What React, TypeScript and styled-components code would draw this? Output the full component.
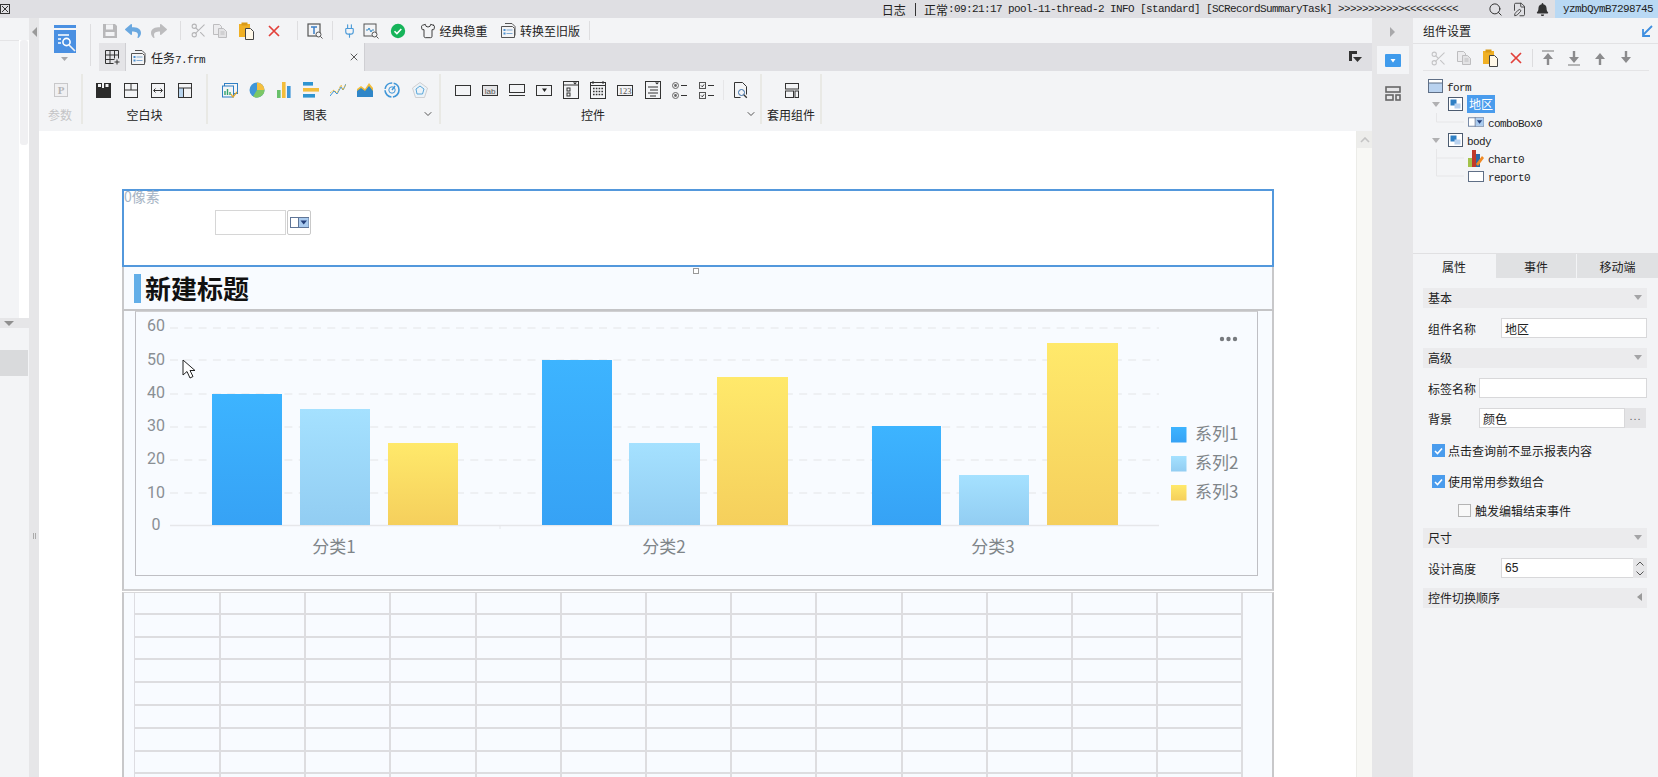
import React from "react";
import styled, { createGlobalStyle } from "styled-components";
import { Scissors, Shirt, Search, FilePen, Plug, X as XIcon, ChevronDown } from "lucide-react";
import { FaReply, FaShare, FaBell } from "react-icons/fa";

const CJK = `"Noto Sans CJK SC", "Liberation Sans", sans-serif`;
const MONO = `"Liberation Mono", "Noto Sans CJK SC", monospace`;

const Global = createGlobalStyle`
  html, body { margin: 0; padding: 0; background: #f3f4f6; }
  * { box-sizing: border-box; }
  body { font-family: ${CJK}; font-size: 12px; color: #222; overflow: hidden; }
`;

const Page = styled.div`
  width: 1658px; height: 777px; display: flex; flex-direction: column; overflow: hidden; background: #f3f4f6; position: relative;
`;
const TopBar = styled.header`
  height: 18px; flex: none; display: flex; align-items: center; background: #dfdfe3;
`;
const WindowMark = styled.svg`width: 10px; height: 10px; flex: none; display: block;`;
const LogArea = styled.div`
  flex: 1; display: flex; justify-content: flex-end; align-items: center; padding-right: 29px; white-space: nowrap; color: #1f1f1f;
`;
const LogCjk = styled.span`font-size: 12px; letter-spacing: 0;`;
const LogDivider = styled.i`width: 1px; height: 13px; background: #333; margin: 0 8px 0 9px;`;
const MonoText = styled.span`font-family: ${MONO}; font-size: 11px; letter-spacing: -0.6px; color: #222;`;
const TopIcons = styled.div`display: flex; align-items: center; gap: 9px; width: 68px; padding-left: 1px; color: #333;`;
const UserBadge = styled.div`
  width: 103px; height: 18px; background: #b9d9f4; display: flex; align-items: center; padding-left: 8px;
`;
const Body = styled.div`flex: 1; display: flex; min-height: 0;`;

const LeftRail = styled.aside`width: 29px; flex: none; display: flex; flex-direction: column; background: #f3f4f6;`;
const RailTop = styled.div`height: 300px; flex: none; display: flex;`;
const RailPane = styled.div`width: 19px; margin-top: 22px; border-top: 1px solid #e4e4e6;`;
const RailStrip = styled.div`width: 10px; background: #fff; margin-top: 22px; padding: 0 1px;`;
const RailThumb = styled.div`height: 105px; width: 8px; background: #f0f0f2; border-radius: 3px;`;
const RailBar = styled.div`height: 10px; flex: none; background: #e6e6e8; display: flex; align-items: center; padding-left: 4px;`;
const RailSelected = styled.div`height: 26px; width: 28px; margin-top: 22px; background: #d9dadc;`;

const Gutter = styled.div<{ $w: number }>`
  width: ${p => p.$w}px; flex: none; background: #e6e6e8; display: flex; flex-direction: column; align-items: center;
`;
const LeftGutterGrip = styled.div`margin-top: auto; margin-bottom: 238px; width: 3px; height: 6px; border-left: 1px solid #aaa; border-right: 1px solid #aaa;`;
const GutterArrow = styled.div`margin-top: 7px; height: 14px; display: flex; align-items: center; justify-content: center;`;
const GutterTab = styled.div<{ $on?: boolean }>`
  width: 32px; height: 28px; display: flex; align-items: center; justify-content: center; margin-top: ${p => (p.$on ? 7 : 5)}px;
  background: ${p => (p.$on ? "#f3f4f6" : "transparent")};
`;

const Center = styled.main`width: 1333px; flex: none; display: flex; flex-direction: column;`;
const Head = styled.div`display: flex; height: 53px; flex: none;`;
const LogoCell = styled.div`
  width: 60px; flex: none; display: flex; flex-direction: column; align-items: center; padding: 7px 9px 0 0; position: relative;
  border-right: 0; gap: 4px;
`;
const LogoRule = styled.i`position: absolute; right: 8px; top: 6px; bottom: 5px; width: 1px; background: #dedee0;`;
const HeadMain = styled.div`flex: 1; display: flex; flex-direction: column; min-width: 0;`;
const QuickBar = styled.div`height: 25px; flex: none; display: flex; align-items: center; padding-left: 1px;`;
const QuickSlot = styled.div<{ $w: number }>`
  width: ${p => p.$w}px; flex: none; height: 25px; display: flex; align-items: center; justify-content: center; gap: 3px; white-space: nowrap;
`;
const QuickRule = styled.i<{ $left?: number }>`width: 1px; height: 19px; background: #dedee0; flex: none; margin-left: ${p => p.$left ?? 0}px;`;
const TabRow = styled.div`height: 28px; flex: none; background: #dfdfe3; display: flex; align-items: stretch; padding-right: 10px;`;
const GridTab = styled.div`width: 27px; background: #e4e4e7; display: flex; align-items: center; justify-content: center; border-right: 1px solid #cfcfd3;`;
const DocTab = styled.div`
  width: 239px; background: #f3f4f6; border-right: 1px solid #cfcfd3; display: flex; align-items: center; padding: 0 4px 0 4px; gap: 4px;
`;
const DocTabClose = styled.span`margin-left: auto; display: flex; color: #333;`;
const TabMenu = styled.div`margin-left: auto; display: flex; align-items: center;`;

const Ribbon = styled.div`height: 60px; flex: none; display: flex; padding-top: 3px;`;
const Section = styled.section<{ $w: number; $pad: number }>`
  width: ${p => p.$w}px; flex: none; height: 50px; border-right: 2px solid #e9e9e5; display: flex; flex-direction: column;
  padding-left: ${p => p.$pad}px;
`;
const RibbonIcons = styled.div`height: 30px; flex: none; display: flex; align-items: center; padding-top: 2px;`;
const RibbonSlot = styled.div`width: 27.15px; flex: none; display: flex; align-items: center; justify-content: center; height: 22px;`;
const RibbonDivider = styled.i`width: 1px; height: 20px; background: #e6e6e8; margin: 0 3px 0 3px; flex: none;`;
const LabelRow = styled.div<{ $pad: number }>`
  height: 20px; flex: none; display: flex; align-items: center; margin-left: -${p => p.$pad}px; color: #222;
`;
const LabelText = styled.span<{ $muted?: boolean }>`flex: 1; text-align: center; font-size: 12px; color: ${p => (p.$muted ? "#c4c4c6" : "#222")}; white-space: nowrap;`;
const LabelChevron = styled.span<{ $w: number }>`width: ${p => p.$w}px; flex: none; display: flex; color: #555;`;

const CanvasRow = styled.div`flex: 1; display: flex; min-height: 0;`;
const Canvas = styled.div`flex: 1; background: #fff; padding: 58px 0 0 83px; overflow: hidden;`;
const VScroll = styled.div`width: 16px; flex: none; background: #f8f8f5; border-left: 1px solid #ecece8;`;
const VScrollUp = styled.div`height: 17px; background: #ededeb; display: flex; align-items: center; justify-content: center;`;

const Form = styled.div`width: 1152px; display: flex; flex-direction: column;`;
const ParamBlock = styled.div`
  height: 78px; flex: none; border: 2px solid #5398dc; background: #fff; display: flex; flex-direction: column;
`;
const PxLabel = styled.div`height: 14px; line-height: 10px; font-size: 14px; color: #a6b4c4;`;
const ParamRow = styled.div`display: flex; margin-top: 5px; padding-left: 91px; gap: 1px;`;
const ParamInput = styled.div`width: 71px; height: 25px; border: 1px solid #d6d6d6; background: #fff;`;
const ParamButton = styled.div`width: 24px; height: 25px; border: 1px solid #c9c9c9; border-radius: 2px; display: flex; align-items: center; justify-content: center;`;
const TitleBlock = styled.div`
  height: 44px; flex: none; position: relative; background: #f8fbff; border-left: 2px solid #c8c8ca; border-right: 2px solid #c8c8ca;
  border-bottom: 2px solid #c4c4c6; display: flex; align-items: center; padding-left: 10px; gap: 4px;
`;
const Handle = styled.i`position: absolute; left: 569px; top: 1px; width: 6px; height: 6px; background: #fff; border: 1px solid #999;`;
const TitleBar = styled.i`width: 7px; height: 29px; background: #62aee8; flex: none;`;
const TitleText = styled.h1`margin: 0; font-size: 26px; line-height: 30px; font-weight: 700; color: #111;`;
const ChartBlock = styled.div`
  height: 280px; flex: none; background: #f8fbff; border-left: 2px solid #c8c8ca; border-right: 2px solid #c8c8ca; border-bottom: 2px solid #d0d0d2;
  padding-left: 11px; position: relative;
`;
const ChartFrame = styled.div`width: 1123px; height: 265px; border: 1px solid #bfbfc4; border-top-color: #d0d0d2;`;
const ChartSvg = styled.svg`display: block; width: 1121px; height: 263px;`;
const Cursor = styled.svg`position: absolute; left: 58px; top: 48px; width: 14px; height: 21px;`;
const TableBlock = styled.div`
  flex: none; height: 190px; margin-top: 1px; background: #f8fbff; border-top: 1px solid #d8d8da; border-left: 2px solid #c8c8ca; border-right: 2px solid #c8c8ca; padding-left: 10px;
`;
const ReportGrid = styled.div`
  display: grid; grid-template-columns: 86px repeat(12, 85.2px); grid-template-rows: 21.8px; grid-auto-rows: 22.8px; border-left: 1px solid #dddde2; width: fit-content;
`;
const ReportCell = styled.div`border-right: 2px solid #dddde0; border-bottom: 2px solid #dddde0;`;

const RightPanel = styled.aside`width: 245px; flex: none; display: flex; flex-direction: column; background: #f3f4f6;`;
const PanelHead = styled.div`height: 26px; flex: none; display: flex; align-items: center; justify-content: space-between; padding: 0 5px 0 10px; border-bottom: 1px solid #e2e2e4; font-size: 12px;`;
const PanelTools = styled.div`height: 27px; flex: none; margin: 0 9px 0 10px; border-bottom: 1px solid #e4e4e6; display: flex; align-items: center; padding: 2px 0 0 2px;`;
const ToolSlot = styled.div`width: 26px; flex: none; display: flex; align-items: center; justify-content: center;`;
const ToolRule = styled.i`width: 1px; height: 18px; background: #dcdcde; margin: 0 2px 0 3px;`;
const Tree = styled.div`height: 182px; flex: none; padding-top: 6px;`;
const TreeRow = styled.div<{ $indent: number }>`height: 18px; display: flex; align-items: center; padding-left: ${p => p.$indent}px; position: relative;`;
const TreeCaret = styled.span`width: 16px; flex: none; display: flex; align-items: center;`;
const TreeElbow = styled.svg`width: 32px; height: 18px; flex: none; display: block;`;
const TreeLabel = styled.span<{ $on?: boolean }>`
  margin-left: 4px; height: 18px; line-height: 18px; display: inline-block; padding: 0 ${p => (p.$on ? 2 : 0)}px;
  color: ${p => (p.$on ? "#fff" : "#222")}; background: ${p => (p.$on ? "#4a9ced" : "transparent")}; font-size: 12px;
`;
const PropTabs = styled.div`height: 25px; flex: none; display: grid; grid-template-columns: 82px 81px 82px; gap: 0; border-top: 1px solid #e0e0e2;`;
const PropTab = styled.div<{ $on?: boolean }>`
  display: flex; align-items: center; justify-content: center; font-size: 12px; background: ${p => (p.$on ? "#f3f4f6" : "#e0e1e3")};
  border-left: ${p => (p.$on ? "0" : "1px solid #f3f4f6")};
`;
const PropList = styled.div`padding: 0 11px 0 10px; display: flex; flex-direction: column;`;
const PropSection = styled.div<{ $top?: number }>`
  height: 20px; flex: none; margin-top: ${p => p.$top ?? 10}px; background: #ebebed; padding: 0 5px 2px; display: flex; align-items: center; justify-content: space-between; font-size: 12px;
`;
const FieldRow = styled.div`height: 20px; flex: none; margin-top: 10px; display: flex; align-items: center; padding-left: 5px;`;
const FieldLabel = styled.span<{ $w: number }>`width: ${p => p.$w}px; flex: none; font-size: 12px; white-space: nowrap;`;
const FieldBox = styled.div`flex: 1; height: 20px; border: 1px solid #d8d8da; background: #fff; display: flex; align-items: center; padding-left: 3px; font-size: 12px;`;
const Number65 = styled.span`font-family: "Liberation Sans", sans-serif; font-size: 12px;`;
const FieldButton = styled.div`width: 21px; height: 20px; flex: none; background: #e4e4e6; margin-right: 1px; display: flex; align-items: center; justify-content: center; color: #666; font-family: "Liberation Sans", sans-serif; font-size: 11px; letter-spacing: 1px; padding-bottom: 4px;`;
const Spinner = styled.div`width: 14px; height: 20px; flex: none; background: #e6e6e8; margin-left: -14px; position: relative; display: flex; flex-direction: column; align-items: center; justify-content: space-around;`;
const CheckRow = styled.label<{ $top: number; $indent: number; $gap?: number }>`
  height: 15px; flex: none; margin-top: ${p => p.$top}px; padding-left: ${p => p.$indent}px; display: flex; align-items: center; gap: ${p => p.$gap ?? 3}px; font-size: 12px; white-space: nowrap;
`;
const CheckBox = styled.span<{ $on?: boolean }>`
  width: 13px; height: 13px; flex: none; background: ${p => (p.$on ? "#4a9ced" : "#f8f8f8")}; border: 1px solid ${p => (p.$on ? "#4a9ced" : "#b4b4b4")}; display: flex; align-items: center; justify-content: center;
`;

type SP = { w?: number; h?: number; vb?: string; children: React.ReactNode };
const Ico = ({ w = 16, h = 16, vb, children }: SP) => (
  <svg width={w} height={h} viewBox={vb ?? `0 0 ${w} ${h}`} fill="none" style={{ display: "block", flex: "none" }}>{children}</svg>
);

const Caret = ({ c = "#9a9a9a", w = 10, h = 5 }: { c?: string; w?: number; h?: number }) => (
  <Ico w={w} h={h}><polygon points={`0,0 ${w},0 ${w / 2},${h}`} fill={c} /></Ico>
);
const CaretSide = () => <Ico w={5} h={8}><polygon points="5,0 5,8 0,4" fill="#9a9a9a" /></Ico>;

const Logo = () => (
  <Ico w={22} h={28}>
    <rect x="0" y="0" width="22" height="3" fill="#4a90e2" />
    <path d="M0 5h22v23H0z" fill="#4a90e2" />
    <path d="M4 10h11M4 14h3M4 18h3" stroke="#fff" strokeWidth="1.4" />
    <circle cx="12.5" cy="17" r="3.6" fill="#4a90e2" stroke="#fff" strokeWidth="1.6" />
    <path d="M15 20l6 6" stroke="#f3f4f6" strokeWidth="1.6" />
  </Ico>
);
const SaveIco = () => (
  <Ico><path d="M1 1h12l2 2v12H1z" fill="#b8b8ba" /><rect x="4" y="1.5" width="7" height="5" fill="#f3f4f6" /><rect x="3.5" y="9" width="9" height="4" fill="#f3f4f6" /></Ico>
);
const CopyIco = ({ c = "#bdbdbf" }: { c?: string }) => (
  <Ico><path d="M1.5 1.5h6l2 2v8h-8z" stroke={c} fill="#ececee" /><path d="M6.5 5.5h5l3 3v6h-8z" stroke={c} fill="#e3e3e5" /><path d="M8.5 9h4M8.5 11h4" stroke={c} /></Ico>
);
const PasteIco = () => (
  <Ico w={17} h={18}><rect x="1" y="2" width="11" height="13" fill="#f0b024" /><rect x="3.5" y="0.5" width="6" height="3" fill="#d99a17" /><path d="M7.5 6.5h5l3 3v8h-8z" fill="#fff8e8" stroke="#444" /></Ico>
);
const RedX = () => <Ico w={14} h={14}><path d="M2 2l10 10M12 2L2 12" stroke="#e2403a" strokeWidth="1.7" /></Ico>;
const TSearch = () => (
  <Ico><rect x="1" y="1" width="12" height="12" stroke="#555" strokeWidth="1.2" /><path d="M4 4h6M7 4v7" stroke="#3a7ec6" strokeWidth="1.5" /><circle cx="11.5" cy="11.5" r="2.5" fill="#f3f4f6" stroke="#555" /><path d="M13.5 13.5l2 2" stroke="#555" /></Ico>
);
const MonitorSearch = () => (
  <Ico><rect x="1" y="1" width="12" height="12" stroke="#555" /><path d="M3 7h2l1-2 2 4 1-2h2" stroke="#3a8cc6" /><circle cx="11.5" cy="11.5" r="2.5" fill="#f3f4f6" stroke="#555" /><path d="M13.5 13.5l2 2" stroke="#555" /></Ico>
);
const GreenCheck = () => <Ico><circle cx="8" cy="8" r="7.2" fill="#16b45a" /><path d="M4.5 8.2l2.4 2.4 4.4-4.6" stroke="#fff" strokeWidth="1.6" /></Ico>;
const DocList = () => (
  <Ico w={17} h={17}><path d="M5 1.5h7l3 3v9" stroke="#555" /><path d="M1.5 4.5h11l2 2v9h-13z" fill="#f3f4f6" stroke="#555" /><rect x="3.5" y="7" width="2" height="2" fill="#4a90d0" /><rect x="3.5" y="10.5" width="2" height="2" fill="#4a90d0" /><path d="M6.5 8h6M6.5 11.5h6" stroke="#7fa9d0" /></Ico>
);
const GridPlus = () => (
  <Ico w={15} h={15}><path d="M.5.5h13M.5.5v13h8M5 .5v13M9.5.5v8M13.5.5v8M.5 5h13M.5 9.5h9" stroke="#333" /><path d="M12 9.5v5M9.5 12h5" stroke="#333" /></Ico>
);
const TabMenuIco = () => <Ico w={13} h={13}><path d="M0 0h8v3H3v7H0z" fill="#333" /><polygon points="4,6 13,6 8.5,11" fill="#333" /></Ico>;

const Rect = ({ w = 16, h = 11, children }: { w?: number; h?: number; children?: React.ReactNode }) => (
  <Ico w={w} h={h}><rect x=".5" y=".5" width={w - 1} height={h - 1} stroke="#333" />{children}</Ico>
);
const R = {
  P: () => <Ico w={14} h={14}><rect x=".5" y=".5" width="13" height="13" stroke="#c8c8ca" fill="#f0f0f2" /><text x="7" y="11" textAnchor="middle" fontFamily="Liberation Serif" fontWeight="700" fontSize="11" fill="#b4b4b6">P</text></Ico>,
  A: () => <Ico w={15} h={15}><path d="M0 0h6v5h1V0h1v0h7v15H0z" fill="#2b2b2b" /><rect x="7" y="0" width="1" height="5" fill="#f3f4f6" /><rect x="9.5" y="1" width="3" height="3" fill="#f3f4f6" /><rect x="2" y="1" width="3" height="3" fill="#f3f4f6" /></Ico>,
  Cross: () => <Ico w={14} h={15}><rect x=".5" y=".5" width="13" height="14" stroke="#333" /><path d="M.5 7h13M7 .5V7" stroke="#333" /></Ico>,
  Fit: () => <Ico w={14} h={15}><rect x=".5" y=".5" width="13" height="14" stroke="#333" /><path d="M3 7.5h8M4.5 5.5l-2 2 2 2M9.5 5.5l2 2-2 2" stroke="#333" /></Ico>,
  Tab: () => <Ico w={14} h={15}><rect x=".5" y=".5" width="13" height="14" stroke="#333" /><rect x="1" y="5" width="4.5" height="9" fill="#b8d4ee" /><path d="M.5 5h13M5.5 5v9.5" stroke="#333" /></Ico>,
  C1: () => <Ico w={16} h={15}><rect x="2.5" y=".5" width="13" height="10" stroke="#2f7fc4" /><rect x=".5" y="3" width="11" height="11" fill="#f3f4f6" stroke="#2f7fc4" /><path d="M3 12V8M5.5 12V6M8 12V9" stroke="#2fa36b" strokeWidth="1.4" /><path d="M9 11l2 3 4-5" stroke="#e0a82e" strokeWidth="1.3" /></Ico>,
  Pie: () => <Ico><circle cx="8" cy="8" r="7.5" fill="#3f96d8" /><path d="M8 8V.5A7.5 7.5 0 0 1 15.5 8z" fill="#f5bf3f" /><path d="M8 8h7.5A7.5 7.5 0 0 1 4 14.4z" fill="#7cc765" /></Ico>,
  Bars: () => <Ico><rect x="1" y="8" width="3.6" height="8" fill="#68c06a" /><rect x="6" y="0" width="3.6" height="16" fill="#f3bd3c" /><rect x="11" y="4" width="3.6" height="12" fill="#3f96d8" /></Ico>,
  HBars: () => <Ico><rect x="0" y="0" width="10" height="3.6" fill="#2f94d0" /><rect x="0" y="6" width="16" height="3.6" fill="#f3bd3c" /><rect x="0" y="12" width="12" height="3.6" fill="#2f94d0" /></Ico>,
  Line: () => <Ico><path d="M0 14l4-5 3 3 4-7 2 3 3-6" stroke="#3f96d8" /><path d="M0 11l4-3 3 3 4-8 2 5 3-6" stroke="#e8b83c" strokeDasharray="2 1" /></Ico>,
  Area: () => <Ico><path d="M0 7l4-3 4 3 4-6 4 5v9H0z" fill="#f2bd3a" /><path d="M0 9l4-3 4 3 4-5 4 5v6H0z" fill="#2f86c8" /></Ico>,
  Gauge: () => <Ico><circle cx="8" cy="8" r="7" stroke="#3f96d8" strokeWidth="1.6" strokeDasharray="10 1.5" /><circle cx="8" cy="8" r="3.2" stroke="#3f96d8" /><path d="M8 8l3-4" stroke="#3f96d8" strokeWidth="1.4" /></Ico>,
  Radar: () => <Ico><polygon points="8,.5 15.5,6 12.5,15.5 3.5,15.5 .5,6" stroke="#cfcfd1" fill="#ecf3f8" /><polygon points="8,4 12,7 10.5,12 5,12 4,7" stroke="#5ba7da" /></Ico>,
  Text: () => <Rect />,
  Lab: () => <Rect><rect x="1" y="1" width="14" height="9" fill="#e4e4e6" /><text x="8" y="8.5" textAnchor="middle" fontFamily="Liberation Sans" fontSize="8" fill="#555">lab</text></Rect>,
  Under: () => <Ico w={16} h={12}><rect x=".5" y=".5" width="15" height="8" stroke="#333" /><path d="M0 11.5h16" stroke="#333" /></Ico>,
  Combo: () => <Rect><polygon points="6,3.5 11,3.5 8.5,7" fill="#222" /></Rect>,
  TreeCb: () => <Ico w={16} h={18}><rect x=".5" y=".5" width="15" height="17" stroke="#333" /><path d="M.5 4h15" stroke="#333" /><polygon points="10,1.5 14,1.5 12,3.5" fill="#222" /><rect x="4" y="7" width="3" height="3" stroke="#333" /><rect x="4" y="12" width="3" height="3" stroke="#333" /></Ico>,
  Cal: () => <Ico w={16} h={18}><rect x=".5" y="1.5" width="15" height="16" stroke="#333" /><path d="M.5 4.5h15M3 0v3M13 0v3" stroke="#333" /><path d="M3 7.5h10M3 10.5h10M3 13.5h10" stroke="#333" strokeWidth="1.6" strokeDasharray="1.6 1.2" /></Ico>,
  N123: () => <Rect><text x="8" y="8.6" textAnchor="middle" fontFamily="Liberation Serif" fontSize="8.5" fill="#555">123</text></Rect>,
  List: () => <Ico w={16} h={18}><rect x=".5" y=".5" width="15" height="17" stroke="#333" /><polygon points="10,1.5 14,1.5 12,3.5" fill="#222" /><path d="M3 6h10M5 9h8M3 12h10M5 15h6" stroke="#333" /></Ico>,
  Radio: () => <Ico w={15} h={17}><circle cx="3.5" cy="3.5" r="3" stroke="#666" /><circle cx="3.5" cy="3.5" r="1.4" fill="#666" /><path d="M9 3.5h6M9 13.5h6" stroke="#333" /><circle cx="3.5" cy="13.5" r="3" stroke="#666" /><circle cx="3.5" cy="13.5" r="1.4" fill="#666" /></Ico>,
  Check: () => <Ico w={15} h={17}><rect x=".5" y=".5" width="6" height="6" stroke="#555" /><path d="M2 3.5l1.3 1.3L5 2.5" stroke="#333" /><path d="M9 3.5h6M9 13.5h6" stroke="#333" /><rect x=".5" y="10.5" width="6" height="6" stroke="#555" /><path d="M2 13.5l1.3 1.3L5 12.5" stroke="#333" /></Ico>,
  Find: () => <Ico w={14} h={17}><path d="M.5.5h8l4 4v8M.5.5v15h6" stroke="#333" /><circle cx="7.5" cy="10.5" r="3" stroke="#3a6ea8" /><path d="M9.8 12.8l3 3" stroke="#333" strokeWidth="1.3" /></Ico>,
  Apply: () => <Ico w={14} h={15}><rect x=".5" y=".5" width="13" height="5.5" stroke="#333" /><rect x=".5" y="8" width="8" height="6.5" stroke="#333" /><rect x="10" y="8" width="3.5" height="6.5" stroke="#333" /></Ico>,
};

const ComboGlyph = ({ w = 19, h = 11 }: { w?: number; h?: number }) => (
  <Ico w={w} h={h} vb="0 0 19 11"><rect x=".5" y=".5" width="18" height="10" fill="#fff" stroke="#5f7597" /><rect x="9" y="1" width="9.5" height="9" fill="#aacbef" /><path d="M8.5 0v11" stroke="#5f7597" /><polygon points="10.5,3.5 17,3.5 13.7,7.5" fill="#243f7a" /></Ico>
);
const FormIco = () => <Ico w={15} h={14}><rect x=".5" y=".5" width="14" height="13" fill="#b9d2ef" stroke="#5f6f86" /><rect x="1" y="1" width="13" height="3" fill="#fff" /><path d="M.5 4h14" stroke="#5f6f86" /></Ico>;
const PanelIco = () => <Ico w={15} h={14}><rect x=".5" y=".5" width="14" height="13" fill="#fff" stroke="#4c5b70" /><rect x="2.5" y="2.5" width="6" height="6" fill="#2f7fc4" /><rect x="6.5" y="6.5" width="6" height="5" fill="#b9d2ef" /></Ico>;
const ChartIco = () => <Ico w={16} h={17}><rect x="0" y="8" width="4" height="9" fill="#a3c24a" /><rect x="4" y="0" width="4" height="17" fill="#c0392b" /><rect x="8" y="4" width="4" height="13" fill="#2c6aa8" /><path d="M8 14l6-8 2 2-6 8z" fill="#f08a24" /></Ico>;
const ReportIco = () => <Ico w={16} h={11}><rect x=".5" y=".5" width="15" height="10" fill="#fff" stroke="#5f6f86" /></Ico>;

const Elbow = ({ full }: { full?: boolean }) => (
  <TreeElbow viewBox="0 0 32 18"><path d={`M.5 0V${full ? 18 : 9}M.5 9H28`} stroke="#e6e6e8" /></TreeElbow>
);
const UpArrow = ({ flip, bar }: { flip?: boolean; bar?: boolean }) => (
  <Ico w={14} h={16}>
    <g transform={flip ? "rotate(180 7 8)" : undefined}>
      {bar && <path d="M1 1h12" stroke="#8b8b8d" strokeWidth="1.2" />}
      <polygon points="7,3 12,9 8.2,9 8.2,15 5.8,15 5.8,9 2,9" fill="#8b8b8d" />
    </g>
  </Ico>
);

const Bar = ({ x, w, top, g }: { x: number; w: number; top: number; g: string }) => (
  <rect x={x} y={top} width={w} height={525 - top} fill={`url(#${g})`} />
);

const Chart = () => (
  <ChartSvg viewBox="136 312 1121 263">
    <defs>
      <linearGradient id="g1" x1="0" y1="0" x2="0" y2="1"><stop offset="0" stopColor="#3db4ff" /><stop offset="1" stopColor="#36a2f5" /></linearGradient>
      <linearGradient id="g2" x1="0" y1="0" x2="0" y2="1"><stop offset="0" stopColor="#a5e1ff" /><stop offset="1" stopColor="#92cdf2" /></linearGradient>
      <linearGradient id="g3" x1="0" y1="0" x2="0" y2="1"><stop offset="0" stopColor="#ffe96b" /><stop offset="1" stopColor="#f5cf5c" /></linearGradient>
    </defs>
    {[328, 360, 394, 427, 460, 493].map(y => (
      <path key={y} d={`M170 ${y}H1159`} stroke="#eaedf0" strokeWidth="1.5" strokeDasharray="8 6.3" />
    ))}
    <path d="M170 525.5H1159" stroke="#e6e7ea" strokeWidth="1.5" />
    <path d="M500 525v4" stroke="#e6e7ea" />
    {[60, 50, 40, 30, 20, 10, 0].map((v, i) => (
      <text key={v} x="156" y={[331, 365, 398, 431, 464, 498, 530][i]} textAnchor="middle" fontFamily="Roboto" fontSize="16" fill="#8a8f94">{v}</text>
    ))}
    <Bar x={212} w={70} top={394} g="g1" />
    <Bar x={300} w={70} top={409} g="g2" />
    <Bar x={388} w={70} top={443} g="g3" />
    <Bar x={542} w={70} top={360} g="g1" />
    <Bar x={629} w={71} top={443} g="g2" />
    <Bar x={717} w={71} top={377} g="g3" />
    <Bar x={872} w={69} top={426} g="g1" />
    <Bar x={959} w={70} top={475} g="g2" />
    <Bar x={1047} w={71} top={343} g="g3" />
    {[["分类1", 334], ["分类2", 664], ["分类3", 993]].map(([t, x]) => (
      <text key={t} x={x} y="553" textAnchor="middle" fontFamily="Noto Sans CJK SC" fontSize="17" fill="#7f8589">{t}</text>
    ))}
    <g fill="#777a7e"><circle cx="1222" cy="339" r="2.2" /><circle cx="1228.5" cy="339" r="2.2" /><circle cx="1235" cy="339" r="2.2" /></g>
    {[["系列1", 427, "g1"], ["系列2", 456, "g2"], ["系列3", 485, "g3"]].map(([t, y, g]) => (
      <g key={t as string}>
        <rect x="1171" y={y as number} width="15.5" height="15.5" fill={`url(#${g})`} />
        <text x="1195" y={(y as number) + 12.5} fontFamily="Noto Sans CJK SC" fontSize="17" fill="#7f8589">{t}</text>
      </g>
    ))}
  </ChartSvg>
);

const chartIcons = [R.C1, R.Pie, R.Bars, R.HBars, R.Line, R.Area, R.Gauge, R.Radar];
const blankIcons = [R.A, R.Cross, R.Fit, R.Tab];
const ctlIcons = [R.Text, R.Lab, R.Under, R.Combo, R.TreeCb, R.Cal, R.N123, R.List, R.Radio, R.Check];

const RibbonGroup = ({ w, pad, label, icons, chevron, muted, after }: {
  w: number; pad: number; label: string; icons: React.ComponentType[]; chevron?: number; muted?: boolean; after?: React.ReactNode;
}) => (
  <Section $w={w} $pad={pad}>
    <RibbonIcons>
      {icons.map((I, i) => <RibbonSlot key={i}><I /></RibbonSlot>)}
      {after}
    </RibbonIcons>
    <LabelRow $pad={pad}>
      <LabelText $muted={muted}>{label}</LabelText>
      {chevron ? <LabelChevron $w={chevron}><ChevronDown size={12} /></LabelChevron> : null}
    </LabelRow>
  </Section>
);

export default function App() {
  return (
    <Page>
      <Global />
      <TopBar>
        <WindowMark viewBox="0 0 10 10"><rect x=".5" y=".5" width="9" height="9" fill="none" stroke="#333" /><path d="M2 2l6 6M8 2L2 8" stroke="#333" /></WindowMark>
        <LogArea>
          <LogCjk>日志</LogCjk>
          <LogDivider />
          <LogCjk>正常</LogCjk>
          <MonoText>:09:21:17 pool-11-thread-2 INFO [standard] [SCRecordSummaryTask] {">>>>>>>>>>><<<<<<<<<"}</MonoText>
        </LogArea>
        <TopIcons>
          <Search size={15} strokeWidth={1.6} />
          <FilePen size={15} strokeWidth={1.4} />
          <FaBell size={13} />
        </TopIcons>
        <UserBadge><MonoText>yzmbQymB7298745</MonoText></UserBadge>
      </TopBar>
      <Body>
        <LeftRail>
          <RailTop><RailPane /><RailStrip><RailThumb /></RailStrip></RailTop>
          <RailBar><Caret c="#8f8f8f" /></RailBar>
          <RailSelected />
        </LeftRail>
        <Gutter $w={10}>
          <GutterArrow><Ico w={5} h={10}><polygon points="5,0 5,10 0,5" fill="#9a9a9a" /></Ico></GutterArrow>
          <LeftGutterGrip />
        </Gutter>
        <Center>
          <Head>
            <LogoCell>
              <Logo />
              <Caret c="#a8a8aa" w={7} h={4} />
              <LogoRule />
            </LogoCell>
            <HeadMain>
              <QuickBar>
                <QuickSlot $w={20}><SaveIco /></QuickSlot>
                <QuickSlot $w={26}><FaReply size={16} color="#6aa8e0" /></QuickSlot>
                <QuickSlot $w={26}><FaShare size={16} color="#bcbcbe" /></QuickSlot>
                <QuickSlot $w={17}><QuickRule /></QuickSlot>
                <QuickSlot $w={18}><Scissors size={17} color="#b5b5b7" strokeWidth={1.5} /></QuickSlot>
                <QuickSlot $w={26}><CopyIco /></QuickSlot>
                <QuickSlot $w={26}><PasteIco /></QuickSlot>
                <QuickSlot $w={29}><RedX /></QuickSlot>
                <QuickSlot $w={19}><QuickRule /></QuickSlot>
                <QuickSlot $w={15}><TSearch /></QuickSlot>
                <QuickSlot $w={20}><QuickRule /></QuickSlot>
                <QuickSlot $w={15}><Plug size={16} color="#4a9ad8" strokeWidth={1.8} /></QuickSlot>
                <QuickSlot $w={27}><MonitorSearch /></QuickSlot>
                <QuickSlot $w={27}><GreenCheck /></QuickSlot>
                <QuickSlot $w={86}><Shirt size={16} color="#333" strokeWidth={1.4} /><span>经典稳重</span></QuickSlot>
                <QuickSlot $w={86}><DocList /><span>转换至旧版</span></QuickSlot>
                <QuickRule $left={6} />
              </QuickBar>
              <TabRow>
                <GridTab><GridPlus /></GridTab>
                <DocTab>
                  <DocList />
                  <span>任务<MonoText>7.frm</MonoText></span>
                  <DocTabClose><XIcon size={12} strokeWidth={1.6} /></DocTabClose>
                </DocTab>
                <TabMenu><TabMenuIco /></TabMenu>
              </TabRow>
            </HeadMain>
          </Head>
          <Ribbon>
            <RibbonGroup w={44} pad={8} label="参数" icons={[R.P]} muted />
            <RibbonGroup w={125} pad={7} label="空白块" icons={blankIcons} />
            <RibbonGroup w={233} pad={8} label="图表" icons={chartIcons} chevron={17} />
            <RibbonGroup w={321} pad={8} label="控件" icons={ctlIcons} chevron={15} after={<><RibbonDivider /><RibbonSlot><R.Find /></RibbonSlot></>} />
            <RibbonGroup w={60} pad={16} label="套用组件" icons={[R.Apply]} />
          </Ribbon>
          <CanvasRow>
            <Canvas>
              <Form>
                <ParamBlock>
                  <PxLabel>0像素</PxLabel>
                  <ParamRow>
                    <ParamInput />
                    <ParamButton><ComboGlyph /></ParamButton>
                  </ParamRow>
                </ParamBlock>
                <TitleBlock>
                  <Handle />
                  <TitleBar />
                  <TitleText>新建标题</TitleText>
                </TitleBlock>
                <ChartBlock>
                  <ChartFrame><Chart /></ChartFrame>
                  <Cursor viewBox="0 0 14 21"><path d="M1 1v15l4-3.5 3 6.5 3-1.5-3-6h5z" fill="#fff" stroke="#222" /></Cursor>
                </ChartBlock>
                <TableBlock>
                  <ReportGrid>
                    {Array.from({ length: 13 * 9 }, (_, i) => <ReportCell key={i} />)}
                  </ReportGrid>
                </TableBlock>
              </Form>
            </Canvas>
            <VScroll>
              <VScrollUp><Ico w={10} h={6}><path d="M1 5l4-4 4 4" stroke="#c4c4c4" strokeWidth="1.6" /></Ico></VScrollUp>
            </VScroll>
          </CanvasRow>
        </Center>
        <Gutter $w={41}>
          <GutterArrow><Ico w={5} h={10}><polygon points="0,0 0,10 5,5" fill="#a8a8aa" /></Ico></GutterArrow>
          <GutterTab $on><Ico w={16} h={13}><rect width="16" height="13" rx="1" fill="#3f9bec" /><polygon points="5.5,5 10.5,5 8,8.5" fill="#fff" /></Ico></GutterTab>
          <GutterTab><Ico w={16} h={15}><rect x="1" y="1" width="14" height="5" stroke="#666" strokeWidth="1.6" /><rect x="1" y="9" width="7" height="5" stroke="#666" strokeWidth="1.6" /><rect x="11" y="9" width="4" height="5" stroke="#666" strokeWidth="1.6" /></Ico></GutterTab>
        </Gutter>
        <RightPanel>
          <PanelHead>
            <span>组件设置</span>
            <Ico w={12} h={12}><path d="M11 1L2 10M2 4v7h7" stroke="#3f8fe0" strokeWidth="1.8" /></Ico>
          </PanelHead>
          <PanelTools>
            <ToolSlot><Scissors size={17} color="#c4c4c6" strokeWidth={1.5} /></ToolSlot>
            <ToolSlot><CopyIco /></ToolSlot>
            <ToolSlot><PasteIco /></ToolSlot>
            <ToolSlot><RedX /></ToolSlot>
            <ToolRule />
            <ToolSlot><UpArrow bar /></ToolSlot>
            <ToolSlot><UpArrow flip bar /></ToolSlot>
            <ToolSlot><UpArrow /></ToolSlot>
            <ToolSlot><UpArrow flip /></ToolSlot>
          </PanelTools>
          <Tree>
            <TreeRow $indent={15}><FormIco /><TreeLabel><MonoText>form</MonoText></TreeLabel></TreeRow>
            <TreeRow $indent={19}><TreeCaret><Caret c="#b0b0b2" w={8} h={5} /></TreeCaret><PanelIco /><TreeLabel $on>地区</TreeLabel></TreeRow>
            <TreeRow $indent={23}><Elbow /><ComboGlyph w={16} h={10} /><TreeLabel><MonoText>comboBox0</MonoText></TreeLabel></TreeRow>
            <TreeRow $indent={19}><TreeCaret><Caret c="#b0b0b2" w={8} h={5} /></TreeCaret><PanelIco /><TreeLabel><MonoText>body</MonoText></TreeLabel></TreeRow>
            <TreeRow $indent={23}><Elbow full /><ChartIco /><TreeLabel><MonoText>chart0</MonoText></TreeLabel></TreeRow>
            <TreeRow $indent={23}><Elbow /><ReportIco /><TreeLabel><MonoText>report0</MonoText></TreeLabel></TreeRow>
          </Tree>
          <PropTabs>
            <PropTab $on>属性</PropTab>
            <PropTab>事件</PropTab>
            <PropTab>移动端</PropTab>
          </PropTabs>
          <PropList>
            <PropSection><span>基本</span><Caret c="#a4a4a6" w={8} h={5} /></PropSection>
            <FieldRow><FieldLabel $w={73}>组件名称</FieldLabel><FieldBox>地区</FieldBox></FieldRow>
            <PropSection><span>高级</span><Caret c="#a4a4a6" w={8} h={5} /></PropSection>
            <FieldRow><FieldLabel $w={51}>标签名称</FieldLabel><FieldBox /></FieldRow>
            <FieldRow><FieldLabel $w={51}>背景</FieldLabel><FieldBox>颜色</FieldBox><FieldButton>...</FieldButton></FieldRow>
            <CheckRow $top={15} $indent={9}>
              <CheckBox $on><Ico w={9} h={8}><path d="M1 4l2.5 2.5L8 1.5" stroke="#fff" strokeWidth="1.6" /></Ico></CheckBox>点击查询前不显示报表内容
            </CheckRow>
            <CheckRow $top={16} $indent={9}>
              <CheckBox $on><Ico w={9} h={8}><path d="M1 4l2.5 2.5L8 1.5" stroke="#fff" strokeWidth="1.6" /></Ico></CheckBox>使用常用参数组合
            </CheckRow>
            <CheckRow $top={14} $indent={35} $gap={4}><CheckBox />触发编辑结束事件</CheckRow>
            <PropSection><span>尺寸</span><Caret c="#a4a4a6" w={8} h={5} /></PropSection>
            <FieldRow>
              <FieldLabel $w={73}>设计高度</FieldLabel><FieldBox><Number65>65</Number65></FieldBox>
              <Spinner>
                <Ico w={8} h={5}><path d="M.5 4.5L4 1l3.5 3.5" stroke="#555" /></Ico>
                <Ico w={8} h={5}><path d="M.5.5L4 4l3.5-3.5" stroke="#555" /></Ico>
              </Spinner>
            </FieldRow>
            <PropSection><span>控件切换顺序</span><CaretSide /></PropSection>
          </PropList>
        </RightPanel>
      </Body>
    </Page>
  );
}
